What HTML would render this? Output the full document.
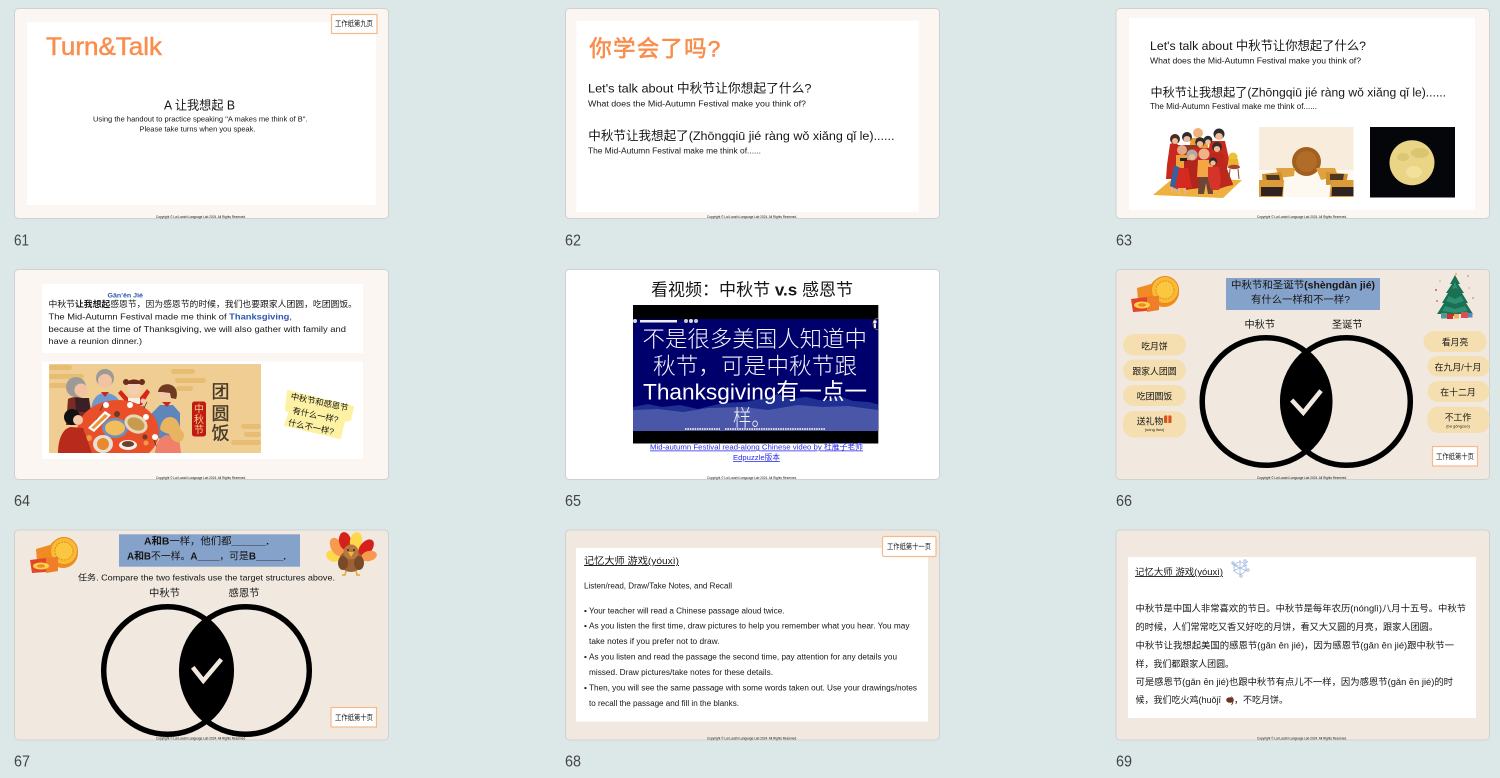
<!DOCTYPE html>
<html lang="zh">
<head>
<meta charset="utf-8">
<title>Slides 61-69</title>
<style>
html,body{margin:0;padding:0;background:#dce8e7;width:1500px;height:778px;overflow:hidden}
svg{display:block;filter:blur(.32px)}
text{font-family:"Liberation Sans","Noto Sans CJK SC",sans-serif;fill:#161616;white-space:pre}
.n{font-size:15.5px;fill:#444}
.f{font-size:3.6px;fill:#111}
.l{font-size:7.4px;fill:#161616}
</style>
</head>
<body>
<svg width="1500" height="778" viewBox="0 0 1500 778" xmlns="http://www.w3.org/2000/svg">
<defs>
<g id="mc">
<path d="M7 10l14-4 8 6v10H8z" fill="#f08a24"/>
<circle cx="34" cy="14" r="15" fill="#f28a1f"/>
<circle cx="35" cy="12" r="13.500" fill="#f9bb35" stroke="#e58a1c" stroke-width="1"/>
<circle cx="35" cy="12" r="9" fill="#fbc640" stroke="#e58a1c" stroke-width=".9" stroke-dasharray="2 1"/>
<path d="M1 21L17 19 29 18 29 32 3 34z" fill="#e2452a"/>
<path d="M17 19l12-1v14l-12 2z" fill="#ef7d2a"/>
<ellipse cx="12" cy="27" rx="8" ry="3.500" fill="#fbd24a"/>
<ellipse cx="12" cy="27" rx="4" ry="1.700" fill="#ee8a22"/>
</g>
<g id="venn-a"><circle r="63.800" fill="none" stroke="#000" stroke-width="5.500"/></g>
<clipPath id="c66"><circle cx="1266" cy="401.500" r="66"/></clipPath>
<clipPath id="c67"><circle cx="167.500" cy="670.500" r="66"/></clipPath>
<clipPath id="din"><rect x="49" y="364" width="212" height="89"/></clipPath>
<clipPath id="vid"><rect x="633" y="319" width="245" height="112"/></clipPath>
</defs>

<rect width="1500" height="778" fill="#dce8e7"/>

<!-- 61 -->
<rect x="14.500" y="8.500" width="374" height="210" rx="4" fill="#fbf6f1" stroke="#cdd2d1"/>
<rect x="27" y="22" width="349" height="183" fill="#fff"/>
<rect x="331.500" y="14.500" width="45.500" height="19" fill="#fff" stroke="#f7b88a" stroke-width="1.200"/>
<text class="l" x="335" y="26" textLength="38" lengthAdjust="spacingAndGlyphs">工作纸第九页</text>
<text x="46" y="55" font-size="25" stroke="#f98e4d" stroke-width=".5" style="fill:#f98e4d" textLength="116" lengthAdjust="spacingAndGlyphs">Turn&amp;Talk</text>
<text x="164" y="109.300" font-size="12.500" textLength="71" lengthAdjust="spacingAndGlyphs">A 让我想起 B</text>
<text x="93" y="121.500" font-size="7" textLength="214.500" lengthAdjust="spacingAndGlyphs">Using the handout to practice speaking "A makes me think of B".</text>
<text x="139.500" y="131.500" font-size="7" textLength="116" lengthAdjust="spacingAndGlyphs">Please take turns when you speak.</text>
<text class="f" x="156" y="218" textLength="90" lengthAdjust="spacingAndGlyphs">Copyright © Lai Laoshi Language Lab 2024. All Rights Reserved.</text>
<text class="n" x="14" y="245.500" textLength="15" lengthAdjust="spacingAndGlyphs">61</text>

<!-- 62 -->
<rect x="565.500" y="8.500" width="374" height="210" rx="4" fill="#fbf6f1" stroke="#cdd2d1"/>
<rect x="576.300" y="20.700" width="342.400" height="191.300" fill="#fff"/>
<text x="589.300" y="56.700" font-size="22.500" stroke="#f98d4b" stroke-width=".6" style="fill:#f98d4b" textLength="131" lengthAdjust="spacing">你学会了吗?</text>
<text x="588" y="92.700" font-size="12.300" textLength="223.500" lengthAdjust="spacingAndGlyphs">Let's talk about 中秋节让你想起了什么?</text>
<text x="588" y="106.700" font-size="7.800" textLength="218" lengthAdjust="spacingAndGlyphs">What does the Mid-Autumn Festival make you think of?</text>
<text x="588.300" y="140" font-size="12.400" textLength="306.200" lengthAdjust="spacingAndGlyphs">中秋节让我想起了(Zhōngqiū jié ràng wǒ xiǎng qǐ le)......</text>
<text x="588" y="153.500" font-size="7.800" textLength="173" lengthAdjust="spacingAndGlyphs">The Mid-Autumn Festival make me think of......</text>
<text class="f" x="707" y="218" textLength="90" lengthAdjust="spacingAndGlyphs">Copyright © Lai Laoshi Language Lab 2024. All Rights Reserved.</text>
<text class="n" x="565" y="245.500" textLength="16" lengthAdjust="spacingAndGlyphs">62</text>

<!-- 63 -->
<rect x="1116" y="8.500" width="373.500" height="210" rx="4" fill="#fbf6f1" stroke="#cdd2d1"/>
<rect x="1129" y="18" width="346" height="192" fill="#fff"/>
<text x="1150" y="50" font-size="12.300" textLength="216" lengthAdjust="spacingAndGlyphs">Let's talk about 中秋节让你想起了什么?</text>
<text x="1150" y="63.500" font-size="7.800" textLength="211" lengthAdjust="spacingAndGlyphs">What does the Mid-Autumn Festival make you think of?</text>
<text x="1150.500" y="96.700" font-size="12.200" textLength="295.500" lengthAdjust="spacingAndGlyphs">中秋节让我想起了(Zhōngqiū jié ràng wǒ xiǎng qǐ le)......</text>
<text x="1150" y="109" font-size="7.800" textLength="167" lengthAdjust="spacingAndGlyphs">The Mid-Autumn Festival make me think of......</text>
<!-- family -->
<g>
<path d="M1153 195l19-16 70 1-19 18z" fill="#eeb140"/>
<path d="M1191 138h15l3 12h-20z" fill="#ec9a35"/>
<circle cx="1198" cy="133" r="5" fill="#efb27e"/>
<path d="M1177 145h22l2 26h-25z" fill="#8e3a24"/>
<circle cx="1187" cy="137" r="5" fill="#2d2a30"/>
<ellipse cx="1187" cy="139" rx="3.500" ry="3" fill="#efbc98"/>
<path d="M1170 144c4-2 8-1 9 3l2 18-3 14h-12l1-14z" fill="#c9281f"/>
<circle cx="1175" cy="139" r="5" fill="#4a2b24"/>
<ellipse cx="1175" cy="141" rx="3" ry="3" fill="#efbc98"/>
<path d="M1175 179h2v13h-2zM1171 179h2v13h-2z" fill="#e9b08e"/>
<path d="M1210 141h15l4 18-2 10 6 15-14 5h-10l-4-12z" fill="#c92a1f"/>
<circle cx="1219" cy="134" r="5.500" fill="#2d2a30"/>
<ellipse cx="1219" cy="136.500" rx="3.800" ry="3.500" fill="#efbc98"/>
<path d="M1193 148h22l4 16-6 16h-16z" fill="#c9281f"/>
<circle cx="1200" cy="142" r="4.800" fill="#2b2a30"/>
<ellipse cx="1200" cy="144" rx="3.200" ry="3" fill="#efbc98"/>
<circle cx="1208" cy="140" r="4.300" fill="#2b2a30"/>
<ellipse cx="1208" cy="142" rx="2.800" ry="2.600" fill="#efbc98"/>
<path d="M1210 153h13l4 16 6 16-15 3-5-14z" fill="#bd281c"/>
<circle cx="1217" cy="147" r="5" fill="#3a2a28"/>
<ellipse cx="1217" cy="149" rx="3.200" ry="3" fill="#efbc98"/>
<path d="M1176 155h13l2 9-6 6-9-4z" fill="#f0a13a"/>
<circle cx="1182" cy="150" r="5" fill="#e8a688"/>
<path d="M1184 160h15l3 16-2 12-16 2z" fill="#b2241c"/>
<circle cx="1192" cy="155" r="5.500" fill="#b0a9a6"/>
<ellipse cx="1192" cy="157" rx="3.300" ry="3" fill="#efbc98"/>
<path d="M1174 165l8 4-3 21-9-4z" fill="#3a5f9d"/>
<rect x="1180" y="158" width="7" height="3" fill="#222"/>
<path d="M1179 168h9l4 20h-17z" fill="#d52a1f"/>
<path d="M1178 188h2v6h-2zM1184 188h2v6h-2z" fill="#e9b08e"/>
<path d="M1198 160h14l2 17h-17z" fill="#f5a544"/>
<circle cx="1204" cy="154" r="5.500" fill="#eeb289"/>
<path d="M1199 177h13l1 17h-5l-2-11-2 11h-6z" fill="#6c4535"/>
<path d="M1208 167h11l2 13-2 10h-8l-3-10z" fill="#d4342a"/>
<circle cx="1213" cy="161.500" r="4" fill="#2d2a30"/>
<ellipse cx="1213" cy="163" rx="2.700" ry="2.500" fill="#efbc98"/>
<circle cx="1233" cy="157" r="4.500" fill="#eabf3a"/>
<path d="M1228.500 159h9.500l1 7h-11z" fill="#e9b531"/>
<ellipse cx="1234" cy="167" rx="6" ry="2.200" fill="#a8442e"/>
<path d="M1230 169l-1 10M1238 169l1 10" stroke="#7b4a35" stroke-width="1"/>
</g>
<!-- mooncakes -->
<rect x="1259" y="127" width="94.500" height="70" fill="#f8ecdc"/>
<rect x="1259" y="170" width="94.500" height="27" fill="#fdf8f0"/>
<circle cx="1306.500" cy="161.500" r="14.500" fill="#a2601f"/>
<circle cx="1306.500" cy="161.500" r="10.500" fill="#b06c28"/>
<path d="M1276 168h19l-1 8-15 2z" fill="#e0a13f"/>
<path d="M1262 174l19-2 3 10-21 3z" fill="#d09030"/>
<path d="M1266 175h13l1 5-13 1z" fill="#4d3721"/>
<path d="M1259 180h25l-1 17h-24z" fill="#dc9a38"/>
<path d="M1261 187h22l-1 9h-21z" fill="#2e2320"/>
<path d="M1316 168h19l3 8-17 4z" fill="#e0a13f"/>
<path d="M1326 172l22 2-2 10-20 1z" fill="#d09030"/>
<path d="M1330 174h14l-1 6h-13z" fill="#4d3721"/>
<path d="M1331 180h22.500v17h-24z" fill="#dc9a38"/>
<path d="M1332 187h21.500v9h-22z" fill="#2e2320"/>
<!-- moon -->
<rect x="1370" y="127" width="85" height="70.500" fill="#05060a"/>
<circle cx="1412" cy="162.700" r="22.500" fill="#e9d585"/>
<ellipse cx="1420" cy="153" rx="9" ry="5" fill="#d6bd66" opacity=".7"/>
<ellipse cx="1403" cy="157" rx="6" ry="4" fill="#d6bd66" opacity=".6"/>
<ellipse cx="1414" cy="172" rx="8" ry="6" fill="#f3e4a0" opacity=".8"/>
<text class="f" x="1257" y="218" textLength="90" lengthAdjust="spacingAndGlyphs">Copyright © Lai Laoshi Language Lab 2024. All Rights Reserved.</text>
<text class="n" x="1116" y="245.500" textLength="16" lengthAdjust="spacingAndGlyphs">63</text>

<!-- 64 -->
<rect x="14.500" y="269.500" width="374" height="210" rx="4" fill="#fbf6f1" stroke="#cdd2d1"/>
<rect x="42" y="284" width="321" height="69" fill="#fff"/>
<rect x="42" y="361.500" width="321" height="97.500" fill="#fff"/>
<text x="107.500" y="297.300" font-size="6.800" font-weight="700" style="fill:#2a57b0" textLength="35.500" lengthAdjust="spacingAndGlyphs">Gǎn'ēn Jié</text>
<text x="48.500" y="307" font-size="8.800" textLength="308.500" lengthAdjust="spacingAndGlyphs">中秋节<tspan font-weight="700">让我想起</tspan>感恩节，因为感恩节的时候，我们也要跟家人团圆，吃团圆饭。</text>
<text x="48.500" y="319.300" font-size="8.500" textLength="243.500" lengthAdjust="spacingAndGlyphs">The Mid-Autumn Festival made me think of <tspan font-weight="700" style="fill:#2a57b0">Thanksgiving</tspan>,</text>
<text x="48.500" y="332" font-size="8.500" textLength="297.500" lengthAdjust="spacingAndGlyphs">because at the time of Thanksgiving, we will also gather with family and</text>
<text x="48.500" y="344" font-size="8.500" textLength="93.500" lengthAdjust="spacingAndGlyphs">have a reunion dinner.)</text>
<!-- dinner -->
<rect x="49" y="364" width="212" height="89" fill="#efcd93"/>
<g fill="#e6bd72">
<rect x="49" y="365" width="23" height="5" rx="2.500"/><rect x="49" y="374" width="35" height="5" rx="2.500"/><rect x="49" y="383" width="18" height="5" rx="2.500"/>
<rect x="171" y="369" width="24" height="5" rx="2.500"/><rect x="175" y="378" width="31" height="5" rx="2.500"/><rect x="176" y="386" width="17" height="5" rx="2.500"/>
<rect x="241" y="424" width="20" height="5" rx="2.500"/><rect x="244" y="432" width="17" height="5" rx="2.500"/><rect x="231" y="440" width="30" height="5" rx="2.500"/>
</g>
<g clip-path="url(#din)">
<circle cx="76" cy="387" r="10" fill="#9c9a96"/>
<circle cx="81" cy="390" r="6.500" fill="#f2c3a2"/>
<path d="M68 399c8-4 18-2 22 6l2 20H66z" fill="#7c2a22"/>
<path d="M75 398h14l2 14H76z" fill="#3a1f26"/>
<circle cx="105" cy="378" r="9" fill="#9c9a96"/>
<circle cx="105" cy="381" r="7" fill="#f2c3a2"/>
<path d="M91 410c1-12 7-17 14-17s15 4 17 15z" fill="#6f97d0"/>
<path d="M101 392h8l-4 5z" fill="#c9281f"/>
<circle cx="134" cy="388" r="7" fill="#f5cdb0"/>
<path d="M126 384c2-6 14-6 16 0z" fill="#6a2c1c"/>
<circle cx="126" cy="382" r="3" fill="#6a2c1c"/><circle cx="142" cy="382" r="3" fill="#6a2c1c"/>
<path d="M121 390l9 10h8l9-11 3 3-8 13h-14l-10-12z" fill="#d4261f"/>
<path d="M128 398h12v6h-12z" fill="#f6efe6"/>
<path d="M157 394c1-5 6-7 10-6 3 1 5 6 3 11h-10z" fill="#f3c8ab"/>
<path d="M158 392c1-7 8-9 13-7 6 2 7 9 5 14l-5-1-1-5-8-1z" fill="#6f3a22"/>
<path d="M143 405l7 10 10-10h13l7 8v25l-16 6-24-28z" fill="#5f86ba"/>
<path d="M162 402h9l-4 5z" fill="#c9281f"/>
<circle cx="143" cy="401" r="2.500" fill="#f3c8ab"/>
<ellipse cx="118" cy="432" rx="41" ry="32" fill="#e9502a"/>
<path d="M147 402l-3 6M104 403l-4 8M97 418l-3 12M130 401l1 7M158 450l-5-12" stroke="#5a2a20" stroke-width=".8"/>
<circle cx="106" cy="405" r="3" fill="#fff"/><circle cx="130" cy="405" r="3" fill="#fff"/><circle cx="146" cy="417" r="3" fill="#fff"/><circle cx="155" cy="437" r="3" fill="#fff"/>
<circle cx="89" cy="438" r="3" fill="#ef9a43"/><circle cx="146" cy="443" r="2.500" fill="#ef9a43"/><circle cx="117" cy="414" r="3" fill="#6c3a25"/><circle cx="145" cy="437" r="2.500" fill="#6c3a25"/>
<path d="M88 428l17-17 6 4-17 17z" fill="#fff"/>
<path d="M91 428l14-14 3 2-14 13z" fill="#e7963c"/>
<ellipse cx="115" cy="428" rx="13" ry="10" fill="#6f8fc0"/>
<ellipse cx="115" cy="428" rx="10" ry="7.500" fill="#f2bd5b"/>
<ellipse cx="136" cy="424" rx="12" ry="9" fill="#e8d7b5" transform="rotate(25 136 424)"/>
<ellipse cx="136" cy="424" rx="9" ry="6" fill="#c89c4f" transform="rotate(25 136 424)"/>
<ellipse cx="103" cy="444" rx="10" ry="9" fill="#e8e0d4"/>
<ellipse cx="103" cy="444" rx="6" ry="6" fill="#e78a2e"/>
<ellipse cx="128" cy="445" rx="9" ry="5" fill="#f5efe5"/>
<ellipse cx="128" cy="444" rx="6" ry="3" fill="#6a4030"/>
<circle cx="72" cy="417" r="8" fill="#111"/>
<circle cx="78" cy="420" r="5" fill="#f3c8ab"/>
<path d="M58 453c0-14 5-25 13-26l12 1 9 25z" fill="#b72a1c"/>
<path d="M155 453c1-10 4-16 12-18l12 3 2 15z" fill="#f0806a"/>
<path d="M160 429c1-10 8-14 14-11 6 3 5 11 9 14 2 3 1 9-4 10-4 1-8-3-10-8-3-1-7-2-9-5z" fill="#e9b461"/>
</g>
<rect x="192" y="401.500" width="14" height="35" rx="2.500" fill="#c01a12"/>
<text x="194" y="412.500" font-size="10" style="fill:#f3cf8a">中</text>
<text x="194" y="423" font-size="10" style="fill:#f3cf8a">秋</text>
<text x="194" y="433.500" font-size="10" style="fill:#f3cf8a">节</text>
<g font-size="18" stroke="#453a2a" stroke-width=".3">
<text x="211.500" y="398" style="fill:#453a2a">团</text>
<text x="211.500" y="420" style="fill:#453a2a">圆</text>
<text x="211.500" y="439.500" style="fill:#453a2a">饭</text>
</g>
<!-- sticky -->
<path d="M288 391l65 16-3 13-6 1-4 17-55-13 5-13-4-2z" fill="#fdf1a3" stroke="#fdf1a3" stroke-width="2" stroke-linejoin="round"/>
<text x="319.500" y="405" font-size="8.400" text-anchor="middle" transform="rotate(12 319.500 402)">中秋节和感恩节</text>
<text x="315.500" y="418" font-size="8.400" text-anchor="middle" transform="rotate(12 315.500 415)">有什么一样?</text>
<text x="311" y="430" font-size="8.400" text-anchor="middle" transform="rotate(12 311 427)">什么不一样?</text>
<text class="f" x="156" y="479" textLength="90" lengthAdjust="spacingAndGlyphs">Copyright © Lai Laoshi Language Lab 2024. All Rights Reserved.</text>
<text class="n" x="14" y="506" textLength="16" lengthAdjust="spacingAndGlyphs">64</text>

<!-- 65 -->
<rect x="565.500" y="269.500" width="374" height="210" rx="4" fill="#fff" stroke="#cdd2d1"/>
<text x="651" y="295.500" font-size="17" textLength="202" lengthAdjust="spacingAndGlyphs">看视频：中秋节 <tspan font-weight="700">v.s</tspan> 感恩节</text>
<rect x="633" y="305" width="245.300" height="138.500" fill="#000"/>
<rect x="633" y="319" width="245.300" height="112" fill="#00006c"/>
<g clip-path="url(#vid)">
<path d="M633 407l15-3 14 3 18-2 18 4 25-6 22-1 20-4 12-4 14 5 15-2 18 4 15-5 14 5 16 1 15 4v30H633z" fill="#1f2f92"/>
<path d="M633 410l25-1 25 3 25-4 35-1 25 3 30-5 25 2 25-1 30 4v22H633z" fill="#4a56a8"/>
</g>
<line x1="685" y1="429" x2="720" y2="429" stroke="#ddd" stroke-width="2" stroke-dasharray="1.500 .9"/>
<line x1="725" y1="429" x2="825" y2="429" stroke="#ddd" stroke-width="2" stroke-dasharray="1.500 .9"/>
<circle cx="635" cy="321" r="2" fill="#ddd"/>
<rect x="640" y="320" width="37" height="2.500" fill="#eee"/>
<circle cx="686" cy="321" r="2" fill="#ccc"/><circle cx="691" cy="321" r="2" fill="#ddd"/><circle cx="696" cy="321" r="2" fill="#ccc"/>
<path d="M878 318a6 6 0 0 0-5 6 6 6 0 0 0 5 6" fill="none" stroke="#a98a2a" stroke-width=".7"/>
<circle cx="875" cy="322" r="1.700" fill="#eee"/><rect x="874" y="324" width="2" height="4" fill="#eee"/>
<g font-weight="300">
<text x="642.500" y="347" font-size="22.500" style="fill:#f4f4fa" textLength="224.500" lengthAdjust="spacingAndGlyphs">不是很多美国人知道中</text>
<text x="653" y="374" font-size="22.500" style="fill:#f4f4fa" textLength="204" lengthAdjust="spacingAndGlyphs">秋节，可是中秋节跟</text>
<text x="643" y="399.500" font-size="22.500" font-weight="400" style="fill:#fff" textLength="224" lengthAdjust="spacingAndGlyphs">Thanksgiving有一点一</text>
<text x="733" y="426" font-size="22.500" style="fill:#f4f4fa" textLength="37" lengthAdjust="spacingAndGlyphs">样。</text>
</g>
<text x="650" y="449.500" font-size="7.700" style="fill:#2a2aee;text-decoration:underline" textLength="213" lengthAdjust="spacingAndGlyphs">Mid-autumn Festival read-along Chinese video by 杜雁子老师</text>
<text x="733" y="460" font-size="7.700" style="fill:#2a2aee;text-decoration:underline" textLength="47" lengthAdjust="spacingAndGlyphs">Edpuzzle版本</text>
<text class="f" x="707" y="479" textLength="90" lengthAdjust="spacingAndGlyphs">Copyright © Lai Laoshi Language Lab 2024. All Rights Reserved.</text>
<text class="n" x="565" y="506" textLength="16" lengthAdjust="spacingAndGlyphs">65</text>

<!-- 66 -->
<rect x="1116" y="269.500" width="373.500" height="210" rx="4" fill="#f1e9df" stroke="#cdd2d1"/>
<rect x="1226" y="278" width="154" height="32" fill="#85a2ca"/>
<text x="1231" y="288.500" font-size="10.300" font-weight="700" textLength="144" lengthAdjust="spacingAndGlyphs"><tspan font-weight="400">中秋节和圣诞节</tspan>(shèngdàn jié)</text>
<text x="1251" y="303" font-size="10" textLength="99" lengthAdjust="spacingAndGlyphs">有什么一样和不一样?</text>
<use href="#mc" x="1130" y="278"/>
<!-- tree -->
<g>
<path d="M1455 275l5 9-2 0 6 9-2 0 6 10-2 0 7 11h-36l7-11-2 0 6-10-2 0 6-9-2 0z" fill="#1b6f55"/>
<path d="M1455 282l3 7-3-1-3 1zM1449 296l6 3 6-3 3 5-9 3-9-3zM1445 306l10 3 10-3 3 5-13 2-13-2z" fill="#2c9070"/>
<rect x="1453" y="313" width="4" height="3" fill="#7a4a2a"/>
<rect x="1441" y="313" width="6" height="5.500" fill="#4f9a94"/><rect x="1447" y="314" width="6" height="5" fill="#d62f2a"/><rect x="1454" y="314" width="5" height="4.500" fill="#eeb45a"/><rect x="1461" y="312" width="7" height="6" fill="#d85050"/><rect x="1468" y="313" width="4.500" height="4.500" fill="#5a88c0"/>
<circle cx="1440" cy="281" r=".9" fill="#e8b08a"/><circle cx="1468" cy="276" r=".9" fill="#d88a7a"/><circle cx="1436" cy="290" r="1" fill="#d85050"/><circle cx="1469" cy="288" r=".9" fill="#e8b08a"/><circle cx="1473" cy="298" r=".9" fill="#d88a7a"/><circle cx="1437" cy="301" r=".9" fill="#d85050"/><circle cx="1456" cy="274" r="1.200" fill="#eec25a"/>
</g>
<text x="1244.500" y="328" font-size="10" textLength="30.500" lengthAdjust="spacingAndGlyphs">中秋节</text>
<text x="1332" y="328" font-size="10" textLength="30.500" lengthAdjust="spacingAndGlyphs">圣诞节</text>
<g fill="#f5dfb0">
<rect x="1123" y="334" width="63" height="21.500" rx="10.700"/>
<rect x="1123" y="359.500" width="63" height="21.500" rx="10.700"/>
<rect x="1123" y="385" width="63" height="21" rx="10.500"/>
<rect x="1123" y="411" width="63" height="26.500" rx="11"/>
<rect x="1423.500" y="331" width="63" height="21" rx="10.500"/>
<rect x="1427.500" y="356" width="62" height="20.500" rx="10.200"/>
<rect x="1427.500" y="381" width="62" height="21" rx="10.500"/>
<rect x="1427.500" y="406.500" width="62" height="26.500" rx="11"/>
</g>
<g font-size="8.900" text-anchor="middle">
<text x="1154.500" y="349.500">吃月饼</text>
<text x="1154.500" y="374.500">跟家人团圆</text>
<text x="1154.500" y="399.500">吃团圆饭</text>
<text x="1150" y="424.500">送礼物</text>
<text x="1154.500" y="431" style="font-size:4px">(sòng lǐwù)</text>
<text x="1455" y="345.500">看月亮</text>
<text x="1458" y="370.500">在九月/十月</text>
<text x="1458" y="395.500">在十二月</text>
<text x="1458" y="420.500">不工作</text>
<text x="1458" y="427.500" style="font-size:4px">(bù gōngzuò)</text>
</g>
<rect x="1164" y="415.500" width="7.500" height="7.500" rx="1" fill="#d9502a"/>
<rect x="1167" y="415.500" width="1.500" height="7.500" fill="#f5c04a"/>
<!-- venn 66 -->
<circle cx="1346.500" cy="401.500" r="66" fill="#000" clip-path="url(#c66)"/>
<use href="#venn-a" x="1266" y="401.500"/>
<use href="#venn-a" x="1346.500" y="401.500"/>
<path d="M1291.700 400l11.600 12.700 17.700-22" fill="none" stroke="#f1e9df" stroke-width="4.500"/>
<rect x="1432.500" y="446.500" width="45" height="19.500" fill="#fff" stroke="#f7b88a" stroke-width="1.200"/>
<text class="l" x="1436" y="459" textLength="38" lengthAdjust="spacingAndGlyphs">工作纸第十页</text>
<text class="f" x="1257" y="479" textLength="90" lengthAdjust="spacingAndGlyphs">Copyright © Lai Laoshi Language Lab 2024. All Rights Reserved.</text>
<text class="n" x="1116" y="506" textLength="16" lengthAdjust="spacingAndGlyphs">66</text>

<!-- 67 -->
<rect x="14.500" y="530" width="374" height="210" rx="4" fill="#f1e9df" stroke="#cdd2d1"/>
<rect x="119" y="534.300" width="181" height="32.400" fill="#85a2ca"/>
<text x="144" y="544.700" font-size="10" font-weight="700" textLength="125" lengthAdjust="spacingAndGlyphs">A和B<tspan font-weight="400">一样，他们都</tspan>______.</text>
<text x="127" y="559.300" font-size="10" font-weight="700" textLength="159" lengthAdjust="spacingAndGlyphs">A和B<tspan font-weight="400">不一样。</tspan>A____<tspan font-weight="400">，可是</tspan>B_____.</text>
<text x="78" y="580.700" font-size="8.300" textLength="257" lengthAdjust="spacingAndGlyphs">任务. Compare the two festivals use the target structures above.</text>
<text x="149" y="596.700" font-size="10" textLength="31" lengthAdjust="spacingAndGlyphs">中秋节</text>
<text x="228.500" y="596.700" font-size="10" textLength="31" lengthAdjust="spacingAndGlyphs">感恩节</text>
<use href="#mc" x="29" y="539"/>
<!-- turkey -->
<g>
<ellipse cx="333" cy="556" rx="7" ry="5.500" fill="#fcd84a" transform="rotate(25 333 556)"/>
<ellipse cx="337" cy="547" rx="6" ry="10" fill="#f79a50" transform="rotate(-30 337 547)"/>
<ellipse cx="345" cy="541" rx="6" ry="9" fill="#d6201c" transform="rotate(-10 345 541)"/>
<ellipse cx="356" cy="541" rx="6" ry="9" fill="#fcd84a" transform="rotate(12 356 541)"/>
<ellipse cx="366" cy="548" rx="6" ry="10" fill="#d6201c" transform="rotate(40 366 548)"/>
<ellipse cx="369" cy="556" rx="8" ry="5" fill="#f79a50" transform="rotate(-15 369 556)"/>
<ellipse cx="351" cy="561" rx="12" ry="11" fill="#9c6236"/>
<ellipse cx="343" cy="563" rx="5" ry="7" fill="#7a4a28"/>
<ellipse cx="359" cy="563" rx="5" ry="7" fill="#7a4a28"/>
<circle cx="351" cy="552" r="7.500" fill="#b5783f"/>
<path d="M348 552h6l-3 5z" fill="#f7b733"/>
<circle cx="348" cy="550" r=".9" fill="#111"/><circle cx="354" cy="550" r=".9" fill="#111"/>
<path d="M346 571l-1 4h-3M356 571l1 4h3" stroke="#e8a82a" stroke-width="1.500" fill="none"/>
</g>
<!-- venn 67 -->
<circle cx="245.500" cy="670.500" r="66" fill="#000" clip-path="url(#c67)"/>
<use href="#venn-a" x="167.500" y="670.500"/>
<use href="#venn-a" x="245.500" y="670.500"/>
<path d="M192.700 667.300l10.600 13.400 18-21.400" fill="none" stroke="#f1e9df" stroke-width="4.500"/>
<rect x="331" y="707.500" width="45.500" height="19.500" fill="#fff" stroke="#f7b88a" stroke-width="1.200"/>
<text class="l" x="335" y="720" textLength="38" lengthAdjust="spacingAndGlyphs">工作纸第十页</text>
<text class="f" x="156" y="739.500" textLength="90" lengthAdjust="spacingAndGlyphs">Copyright © Lai Laoshi Language Lab 2024. All Rights Reserved.</text>
<text class="n" x="14" y="766.700" textLength="16" lengthAdjust="spacingAndGlyphs">67</text>

<!-- 68 -->
<rect x="565.500" y="530" width="374" height="210" rx="4" fill="#f1e9df" stroke="#cdd2d1"/>
<rect x="576" y="548" width="352" height="173.500" fill="#fff"/>
<rect x="882.500" y="536.500" width="53.500" height="20" rx="1.500" fill="#fff" stroke="#f7b88a" stroke-width="1.200"/>
<text class="l" x="887" y="549" textLength="44" lengthAdjust="spacingAndGlyphs">工作纸第十一页</text>
<text x="584" y="564" font-size="9.500" style="text-decoration:underline" textLength="95" lengthAdjust="spacingAndGlyphs">记忆大师 游戏(yóuxì)</text>
<g font-size="7.800">
<text x="584" y="588.700" textLength="148" lengthAdjust="spacingAndGlyphs">Listen/read, Draw/Take Notes, and Recall</text>
<text x="584" y="613.300">▪</text>
<text x="589" y="613.300" textLength="195.500" lengthAdjust="spacingAndGlyphs">Your teacher will read a Chinese passage aloud twice.</text>
<text x="584" y="628.700">▪</text>
<text x="589" y="628.700" textLength="320.500" lengthAdjust="spacingAndGlyphs">As you listen the first time, draw pictures to help you remember what you hear. You may</text>
<text x="589" y="644" textLength="130.500" lengthAdjust="spacingAndGlyphs">take notes if you prefer not to draw.</text>
<text x="584" y="659.500">▪</text>
<text x="589" y="659.500" textLength="308" lengthAdjust="spacingAndGlyphs">As you listen and read the passage the second time, pay attention for any details you</text>
<text x="589" y="675" textLength="184" lengthAdjust="spacingAndGlyphs">missed. Draw pictures/take notes for these details.</text>
<text x="584" y="690.500">▪</text>
<text x="589" y="690.500" textLength="328" lengthAdjust="spacingAndGlyphs">Then, you will see the same passage with some words taken out. Use your drawings/notes</text>
<text x="589" y="706" textLength="150" lengthAdjust="spacingAndGlyphs">to recall the passage and fill in the blanks.</text>
</g>
<text class="f" x="707" y="739.500" textLength="90" lengthAdjust="spacingAndGlyphs">Copyright © Lai Laoshi Language Lab 2024. All Rights Reserved.</text>
<text class="n" x="565" y="766.700" textLength="16" lengthAdjust="spacingAndGlyphs">68</text>

<!-- 69 -->
<rect x="1116" y="530" width="373.500" height="210" rx="4" fill="#f1e9df" stroke="#cdd2d1"/>
<rect x="1128" y="557" width="348" height="161" fill="#fff"/>
<text x="1135" y="575" font-size="9" style="text-decoration:underline" textLength="88" lengthAdjust="spacingAndGlyphs">记忆大师 游戏(yóuxì)</text>
<g fill="none" stroke="#a3b8e2" stroke-width=".8">
<circle cx="1240" cy="568" r="6"/>
<path d="M1240 560v17M1233 565l14 6M1233 571l14-6M1232 563l6 3M1248 561l-5 5"/>
<circle cx="1233" cy="563" r="1.200"/><circle cx="1245" cy="561" r="1.200"/><circle cx="1248" cy="570" r="1.200"/><circle cx="1241" cy="576" r="1.200"/>
</g>
<g font-size="9.300">
<text x="1135.500" y="611.300" textLength="330.500" lengthAdjust="spacingAndGlyphs">中秋节是中国人非常喜欢的节日。中秋节是每年农历(nónglì)八月十五号。中秋节</text>
<text x="1135.500" y="630" textLength="302.500" lengthAdjust="spacingAndGlyphs">的时候，人们常常吃又香又好吃的月饼，看又大又圆的月亮，跟家人团圆。</text>
<text x="1135.500" y="648.700" textLength="318.500" lengthAdjust="spacingAndGlyphs">中秋节让我想起美国的感恩节(gǎn ēn jié)，因为感恩节(gǎn ēn jié)跟中秋节一</text>
<text x="1135.500" y="667" textLength="98.500" lengthAdjust="spacingAndGlyphs">样，我们都跟家人团圆。</text>
<text x="1135.500" y="685" textLength="317.500" lengthAdjust="spacingAndGlyphs">可是感恩节(gǎn ēn jié)也跟中秋节有点儿不一样，因为感恩节(gǎn ēn jié)的时</text>
<text x="1135.500" y="703" textLength="152.500" lengthAdjust="spacingAndGlyphs">候，我们吃火鸡(huǒjī    )，不吃月饼。</text>
</g>
<ellipse cx="1230" cy="700" rx="3.800" ry="2.800" fill="#6b3620"/>
<text class="f" x="1257" y="739.500" textLength="90" lengthAdjust="spacingAndGlyphs">Copyright © Lai Laoshi Language Lab 2024. All Rights Reserved.</text>
<text class="n" x="1116" y="766.700" textLength="16" lengthAdjust="spacingAndGlyphs">69</text>
</svg>
</body>
</html>
